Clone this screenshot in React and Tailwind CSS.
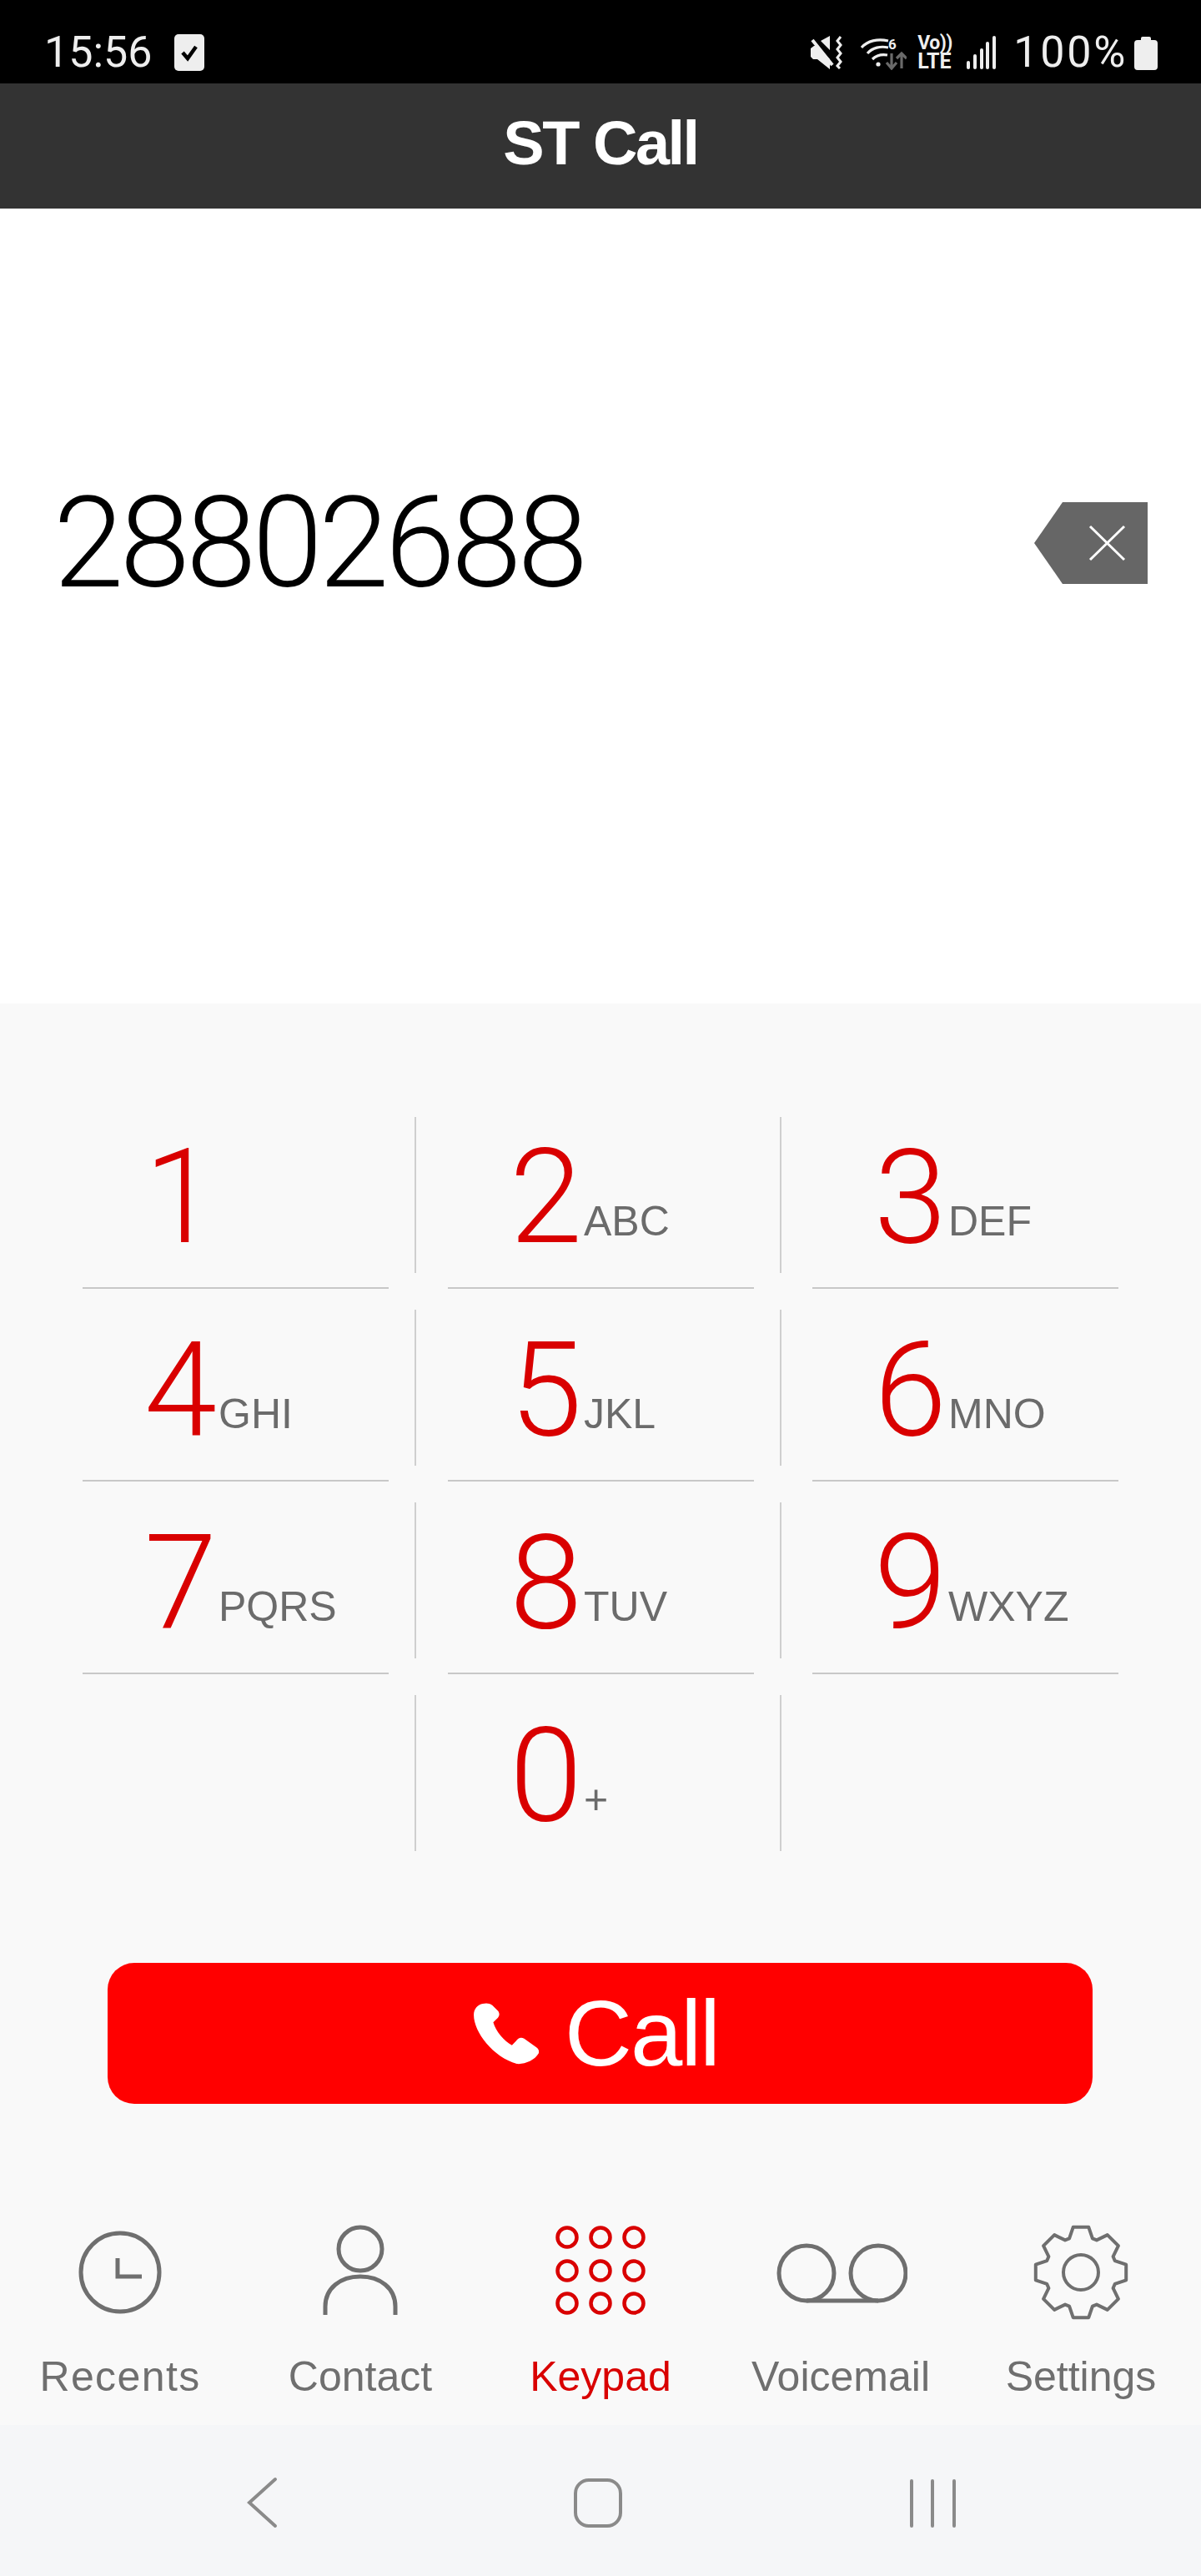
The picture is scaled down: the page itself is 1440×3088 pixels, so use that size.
import React from 'react';

const keys = [
  ['1', ''], ['2', 'ABC'], ['3', 'DEF'],
  ['4', 'GHI'], ['5', 'JKL'], ['6', 'MNO'],
  ['7', 'PQRS'], ['8', 'TUV'], ['9', 'WXYZ'],
  ['', ''], ['0', '+'], ['', ''],
];

// builds the 8 tooth outline of the settings cog
const gearPath = (cx, cy, outer, inner) => {
  const pts = [];
  for (let i = 0; i < 8; i++) {
    const a = (i * Math.PI) / 4 - Math.PI / 2;
    const step = [[-0.33, inner], [-0.17, outer], [0.17, outer], [0.33, inner]];
    step.forEach(([d, r]) => {
      pts.push([cx + r * Math.cos(a + d), cy + r * Math.sin(a + d)]);
    });
  }
  return 'M' + pts.map((p) => p[0].toFixed(1) + ' ' + p[1].toFixed(1)).join('L') + 'Z';
};

const StatusBar = () => (
  <div className="h-[100px] bg-black flex items-center justify-between pt-[26px] pl-[53px] pr-[52px] text-[#eeeeee] font-['Roboto',sans-serif]">
    <div className="flex items-center gap-[26px]">
      <span className="text-[52px] leading-[60px]">15:56</span>
      <svg width="36" height="44" viewBox="0 0 36 44">
        <rect width="36" height="44" rx="5" fill="#eeeeee" />
        <path d="M10 22l6 7 10-14" fill="none" stroke="#000" strokeWidth="4.5" />
      </svg>
    </div>
    <div className="flex items-center">
      <svg width="39" height="40" viewBox="0 0 39 40">
        <path d="M0 15l4-3h3l16 16v12L8 28H3l-3-3z M12 6L23 0v17z" fill="#eeeeee" />
        <path d="M3 1l24 30" stroke="#eeeeee" strokeWidth="4" transform="translate(-1 4)" />
        <path d="M36 1l-4 5 4 5-4 5 4 5-4 5 4 5-4 5 3 3" fill="none" stroke="#eeeeee" strokeWidth="3" />
      </svg>
      <svg className="ml-[21px]" width="55" height="42" viewBox="0 0 55 42">
        <g fill="none" stroke="#eeeeee" strokeWidth="3.2">
          <path d="M1 15C8 7 20 4 33 7" />
          <path d="M8 22C14 15 24 13 33 15" />
          <path d="M14 29C19 24 26 23 32 24" />
        </g>
        <circle cx="21" cy="35" r="2.6" fill="#eeeeee" />
        <text x="33" y="17" fill="#eeeeee" fontSize="17" fontWeight="700" fontFamily="Roboto">6</text>
        <path d="M37 22v17M31 33l6 7 6-7M49 40V22M43 28l6-6 6 6" fill="none" stroke="#6a6a6a" strokeWidth="3.2" />
      </svg>
      <div className="ml-[13px] w-[42px] flex flex-col font-bold">
        <span className="text-[23px] leading-[22px] tracking-[-0.5px]">Vo))</span>
        <span className="text-[25px] leading-[22px]">LTE</span>
      </div>
      <svg className="ml-[17px]" width="35" height="40" viewBox="0 0 35 40">
        <g fill="#eeeeee">
          <rect x="0" y="30" width="4" height="10" rx="2" />
          <rect x="8" y="22" width="4" height="18" rx="2" />
          <rect x="16" y="15" width="4" height="25" rx="2" />
          <rect x="23" y="7" width="4" height="33" rx="2" />
          <rect x="31" y="0" width="4" height="40" rx="2" />
        </g>
      </svg>
      <span className="ml-[21px] text-[52px] leading-[60px] tracking-[2.75px]">100%</span>
      <svg className="ml-[8px]" width="28" height="41" viewBox="0 0 28 41">
        <path d="M8 3a2 2 0 012-2h8a2 2 0 012 2v2h4a4 4 0 014 4v28a4 4 0 01-4 4H4a4 4 0 01-4-4V9a4 4 0 014-4h4z" fill="#eeeeee" />
      </svg>
    </div>
  </div>
);

const Key = ({ digit, letters, last, lastRow }) => (
  <div className="flex flex-col">
    <div className={`h-[187px] flex items-start ${last ? 'w-[367px]' : 'w-[400px] border-r-2 border-[#cfcfcf]'}`}>
      <div className="flex items-end pl-[74px] mt-[18px] font-['Liberation_Sans',sans-serif]">
        <span className="w-[89px] h-[157px] text-[157px] leading-[157px] text-[#d90000] font-['Roboto',sans-serif] font-light">{digit}</span>
        <span className="mb-[25px] text-[50px] leading-[50px] text-[#6b6b6b]">{letters}</span>
      </div>
    </div>
    {!lastRow && <div className="w-[367px] h-[2px] mt-[17px] bg-[#c8c8c8]" />}
  </div>
);

const tabs = [
  {
    label: 'Recents',
    labelClass: 'text-[#6f6f6f] tracking-[1.4px]',
    icon: (
      <g fill="none" stroke="#6f6f6f" strokeWidth="5">
        <circle cx="80" cy="59" r="47" />
        <path d="M77 42v22h29" />
      </g>
    ),
  },
  {
    label: 'Contact',
    labelClass: 'text-[#6f6f6f]',
    icon: (
      <g fill="none" stroke="#6f6f6f" strokeWidth="5">
        <circle cx="80" cy="31" r="26" />
        <path d="M38 110V100C38 78 56 64 80 64S122 78 122 100V110" />
      </g>
    ),
  },
  {
    label: 'Keypad',
    labelClass: 'text-[#d90000]',
    icon: (
      <g fill="none" stroke="#d90000" strokeWidth="4.5">
        {[17, 57, 96].map((y) =>
          [40, 80, 120].map((x) => <circle key={`${x}-${y}`} cx={x} cy={y} r="11.5" />)
        )}
      </g>
    ),
  },
  {
    label: 'Voicemail',
    labelClass: 'text-[#6f6f6f]',
    icon: (
      <g fill="none" stroke="#6f6f6f" strokeWidth="5">
        <circle cx="39" cy="60" r="33" />
        <circle cx="125" cy="60" r="33" />
        <path d="M39 93H125" />
      </g>
    ),
  },
  {
    label: 'Settings',
    labelClass: 'text-[#6f6f6f]',
    icon: (
      <g fill="none" stroke="#6f6f6f" strokeWidth="4" strokeLinejoin="round">
        <path d={gearPath(80, 59, 55, 43)} />
        <circle cx="80" cy="59" r="21" />
      </g>
    ),
  },
];

export default function App() {
  return (
    <div className="w-[1440px] h-[3088px] flex flex-col overflow-hidden bg-white font-['Liberation_Sans',sans-serif]">
      <StatusBar />

      {/* Header */}
      <div className="h-[150px] bg-[#333333] flex items-center justify-center pb-[6px]">
        <h1 className="text-[74px] leading-[80px] font-bold text-white tracking-[-2.5px]">ST Call</h1>
      </div>

      {/* Number display */}
      <div className="h-[953px] bg-white flex items-start justify-between pl-[64px] pr-[64px] pt-[321px]">
        <span className="text-[152px] leading-[160px] text-black font-['Roboto',sans-serif] font-light tracking-[-4.8px]">28802688</span>
        <svg className="mt-[31px]" width="136" height="98" viewBox="0 0 136 98">
          <path d="M34 0H136V98H34L0 49z" fill="#666666" />
          <path d="M67 29l41 40M108 29L67 69" stroke="#ffffff" strokeWidth="3" />
        </svg>
      </div>

      {/* Keypad */}
      <div className="h-[1704px] bg-[#f9f9f9] pt-[136px] flex flex-col">
        <div className="grid grid-cols-[438px_437px_367px] auto-rows-[231px] ml-[99px]">
          {keys.map(([digit, letters], i) => (
            <Key key={i} digit={digit} letters={letters} last={i % 3 === 2} lastRow={i >= 9} />
          ))}
        </div>

        <button className="mt-[90px] mx-[129px] w-[1181px] h-[169px] rounded-[32px] bg-[#ff0000] flex items-center justify-center gap-[30px] pr-[10px] text-white">
          <svg width="80" height="74" viewBox="0 0 82 76">
            <path d="M12 1C6 2 1 7 1 15C1 36 25 67 54 75C63 76 76 71 81 62C82 58 80 56 77 54L63 44C59 42 56 43 53 47L48 52C38 47 28 35 25 24L30 19C33 16 33 13 31 10L24 3C20 0 16 0 12 1Z" fill="#ffffff" />
          </svg>
          <span className="text-[112px] leading-[120px] tracking-[-2px]">Call</span>
        </button>

        <div className="mt-[143px] grid grid-cols-5">
          {tabs.map((tab) => (
            <div key={tab.label} className="flex flex-col items-center">
              <svg width="160" height="120" viewBox="0 0 160 120">
                {tab.icon}
              </svg>
              <span className={`mt-[36px] text-[50px] leading-[56px] ${tab.labelClass}`}>
                {tab.label}
              </span>
            </div>
          ))}
        </div>
      </div>

      {/* Android nav */}
      <div className="h-[181px] bg-[#f5f6f8] flex items-center justify-center">
        <svg width="1440" height="181" viewBox="0 0 1440 181">
          <g fill="none" stroke="#8a8a8a" strokeWidth="4" strokeLinecap="round">
            <path d="M330 65L299 93L330 121" />
            <rect x="690" y="66" width="54" height="55" rx="16" />
            <path d="M1093 67V121M1118 67V121M1144 67V121" />
          </g>
        </svg>
      </div>
    </div>
  );
}
